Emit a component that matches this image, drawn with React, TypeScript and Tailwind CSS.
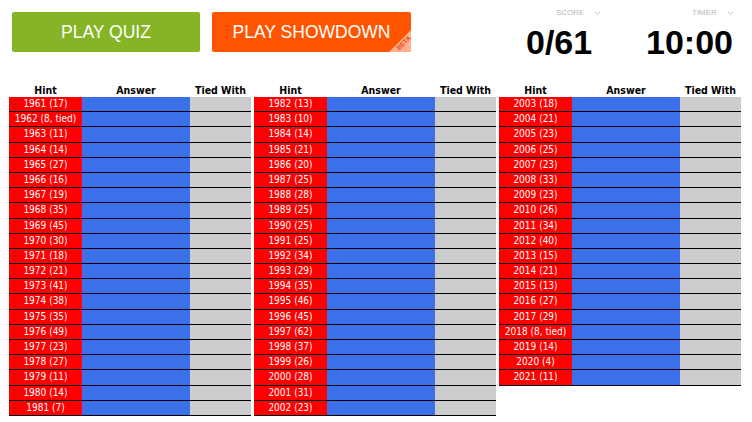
import React from "react";

const tables: string[][] = [
  [
    "1961 (17)", "1962 (8, tied)", "1963 (11)", "1964 (14)", "1965 (27)", "1966 (16)", "1967 (19)",
    "1968 (35)", "1969 (45)", "1970 (30)", "1971 (18)", "1972 (21)", "1973 (41)", "1974 (38)",
    "1975 (35)", "1976 (49)", "1977 (23)", "1978 (27)", "1979 (11)", "1980 (14)", "1981 (7)",
  ],
  [
    "1982 (13)", "1983 (10)", "1984 (14)", "1985 (21)", "1986 (20)", "1987 (25)", "1988 (28)",
    "1989 (25)", "1990 (25)", "1991 (25)", "1992 (34)", "1993 (29)", "1994 (35)", "1995 (46)",
    "1996 (45)", "1997 (62)", "1998 (37)", "1999 (26)", "2000 (28)", "2001 (31)", "2002 (23)",
  ],
  [
    "2003 (18)", "2004 (21)", "2005 (23)", "2006 (25)", "2007 (23)", "2008 (33)", "2009 (23)",
    "2010 (26)", "2011 (34)", "2012 (40)", "2013 (15)", "2014 (21)", "2015 (13)", "2016 (27)",
    "2017 (29)", "2018 (8, tied)", "2019 (14)", "2020 (4)", "2021 (11)",
  ],
];

const Chevron = () => (
  <svg width="7" height="5" viewBox="0 0 7 5" className="ml-[10px]">
    <polyline points="1,1 3.5,3.5 6,1" fill="none" stroke="#c4c4c4" strokeWidth="1" />
  </svg>
);

const QuizTable = ({ rows }: { rows: string[] }) => (
  <div className="w-[242px] font-['Tahoma','DejaVu_Sans_Condensed','DejaVu_Sans',sans-serif]">
    <div className="grid grid-cols-[73px_108px_61px] h-[13px] text-[10.5px] leading-[13px] font-bold text-black text-center">
      <div>Hint</div>
      <div>Answer</div>
      <div>Tied With</div>
    </div>
    {rows.map((r) => (
      <div
        key={r}
        className="grid grid-cols-[73px_108px_61px] h-[15.2px] border-b border-black"
      >
        <div className="bg-[#ff0000] text-white text-[10px] leading-[14px] text-center overflow-hidden">{r}</div>
        <div className="bg-[#3a70ea]"></div>
        <div className="bg-[#cccccc]"></div>
      </div>
    ))}
  </div>
);

export default function App() {
  return (
    <div className="w-[752px] h-[422px] bg-white overflow-hidden">
      <div className="flex items-start pt-[9px] font-['Liberation_Sans',Arial,sans-serif]">
        <button className="ml-[12px] mt-[3px] w-[188px] h-[40px] rounded-[2px] bg-[#85b426] text-white text-[17.5px]">
          PLAY QUIZ
        </button>
        <button className="relative overflow-hidden ml-[12px] mt-[3px] w-[199px] h-[40px] rounded-[2px] bg-[#ff5500] text-white text-[17.5px]">
          PLAY SHOWDOWN
          <span className="absolute right-0 bottom-0 w-[22px] h-[22px] bg-[#ffb090] [clip-path:polygon(100%_0,100%_100%,0_100%)]"></span>
          <span className="absolute right-[-6px] bottom-[6px] w-[26px] -rotate-45 text-center text-[6.5px] font-bold leading-none text-[#f04a0a]">
            BETA
          </span>
        </button>
        <div className="ml-[115px] w-[80px]">
          <div className="flex items-center pl-[30px] h-[8px] text-[8px] leading-none text-[#b8b8b8]">
            SCORE
            <Chevron />
          </div>
          <div className="mt-[8px] text-[34px] leading-none font-bold text-black">0/61</div>
        </div>
        <div className="ml-[40px] w-[100px]">
          <div className="flex items-center pl-[46px] h-[8px] text-[8px] leading-none text-[#b8b8b8]">
            TIMER
            <Chevron />
          </div>
          <div className="mt-[8px] text-[34px] leading-none font-bold text-black">10:00</div>
        </div>
      </div>
      <div className="flex gap-[3px] ml-[9px] mt-[25px]">
        {tables.map((t, i) => (
          <QuizTable key={i} rows={t} />
        ))}
      </div>
    </div>
  );
}
